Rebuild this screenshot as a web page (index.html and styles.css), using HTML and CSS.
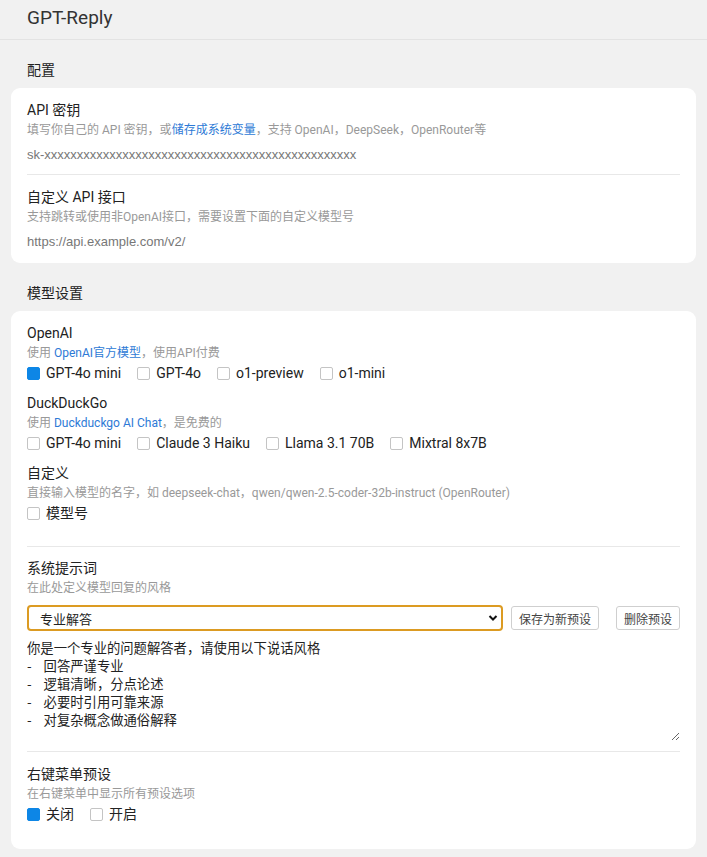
FILE: index.html
```html
<!DOCTYPE html>
<html>
<head>
<title>GPT-Reply</title>
<meta charset="UTF-8">
<link rel="stylesheet" href="styles.css">
</head>
<body>
<div class="topbar">GPT-Reply</div>

<h3 class="group-title">配置</h3>
<div class="card">
  <div class="field">
    <div class="label">API 密钥</div>
    <div class="desc">填写你自己的 API 密钥，或<a href="#">储存成系统变量</a>，支持 OpenAI，DeepSeek，OpenRouter等</div>
    <input type="text" class="plain-input" value="sk-xxxxxxxxxxxxxxxxxxxxxxxxxxxxxxxxxxxxxxxxxxxxxxxx">
  </div>
  <div class="field">
    <div class="label">自定义 API 接口</div>
    <div class="desc">支持跳转或使用非OpenAI接口，需要设置下面的自定义模型号</div>
    <input type="text" class="plain-input" value="https://api.example.com/v2/">
  </div>
</div>

<h3 class="group-title">模型设置</h3>
<div class="card card-models">
  <div class="field models">
    <div class="label">OpenAI</div>
    <div class="desc">使用 <a href="#">OpenAI官方模型</a>，使用API付费</div>
    <div class="checks">
      <label class="check"><span class="box on"></span>GPT-4o mini</label>
      <label class="check"><span class="box"></span>GPT-4o</label>
      <label class="check"><span class="box"></span>o1-preview</label>
      <label class="check"><span class="box"></span>o1-mini</label>
    </div>

    <div class="label">DuckDuckGo</div>
    <div class="desc">使用 <a href="#">Duckduckgo AI Chat</a>，是免费的</div>
    <div class="checks">
      <label class="check"><span class="box"></span>GPT-4o mini</label>
      <label class="check"><span class="box"></span>Claude 3 Haiku</label>
      <label class="check"><span class="box"></span>Llama 3.1 70B</label>
      <label class="check"><span class="box"></span>Mixtral 8x7B</label>
    </div>

    <div class="label">自定义</div>
    <div class="desc">直接输入模型的名字，如 deepseek-chat，qwen/qwen-2.5-coder-32b-instruct (OpenRouter)</div>
    <div class="checks">
      <label class="check"><span class="box"></span>模型号</label>
    </div>
  </div>

  <div class="field prompt">
    <div class="label">系统提示词</div>
    <div class="desc">在此处定义模型回复的风格</div>
    <div class="preset-row">
      <div class="select-wrap">
        <select class="preset-select">
          <option>专业解答</option>
        </select>
        <svg class="chevron" width="10" height="8" viewBox="0 0 10 8"><path d="M1.5 2 L5 5.5 L8.5 2" fill="none" stroke="#111" stroke-width="2"/></svg>
      </div>
      <button class="btn">保存为新预设</button>
      <button class="btn btn-del">删除预设</button>
    </div>
    <textarea class="prompt-text">你是一个专业的问题解答者，请使用以下说话风格
-    回答严谨专业
-    逻辑清晰，分点论述
-    必要时引用可靠来源
-    对复杂概念做通俗解释</textarea>
  </div>

  <div class="field menu">
    <div class="label">右键菜单预设</div>
    <div class="desc">在右键菜单中显示所有预设选项</div>
    <div class="checks">
      <label class="check"><span class="box on"></span>关闭</label>
      <label class="check"><span class="box"></span>开启</label>
    </div>
  </div>
</div>
</body>
</html>
```

FILE: styles.css
```css
body{
    margin: 0;
    background: #f1f1f1;
    color: #222;
    font-family: Roboto, "Noto Sans CJK SC", sans-serif;
    font-size: 14px;
}
.topbar{
    height: 39px;
    line-height: 36px;
    padding-left: 27px;
    font-size: 19px;
    color: #333;
    border-bottom: 1px solid #e3e3e3;
}
.group-title{
    margin: 20px 0 8px;
    padding-left: 27px;
    font-size: 14px;
    font-weight: normal;
    line-height: 20px;
}
.card{
    background: #fff;
    margin: 0 11px;
    border-radius: 9px;
    padding: 12px 16px 12px;
}
.card-models{
    padding-bottom: 13px;
}
.field{
    padding: 12px 0 10px;
    border-top: 1px solid #e8e8e8;
}
.field:first-child{
    padding-top: 0;
    border-top: none;
}
.field:last-child{
    padding-bottom: 0;
}
.label{
    line-height: 20px;
}
.desc{
    margin-top: 1px;
    font-size: 12px;
    line-height: 18px;
    color: #999;
}
.desc a{
    color: #2d7ad6;
    text-decoration: none;
}
.plain-input{
    display: block;
    width: 100%;
    box-sizing: border-box;
    margin-top: 5px;
    height: 20px;
    padding: 0;
    border: none;
    outline: none;
    font-family: "Liberation Sans", Arial, sans-serif;
    font-size: 13px;
    color: #777;
}
.checks{
    display: flex;
    gap: 16px;
    margin-top: 2px;
    margin-bottom: 11px;
}
.check{
    display: flex;
    align-items: center;
    line-height: 18px;
}
.box{
    width: 13px;
    height: 13px;
    box-sizing: border-box;
    border: 1px solid #c4c4c4;
    border-radius: 2px;
    margin-right: 6px;
}
.box.on{
    background: #0d86e6;
    border-color: #0d86e6;
}
.models{
    padding-bottom: 13px;
}
.prompt{
    padding-top: 11px;
}
.preset-row{
    display: flex;
    align-items: center;
    margin-top: 8px;
}
.select-wrap{
    position: relative;
    flex: 1;
    margin-right: 8px;
}
.preset-select{
    display: block;
    width: 100%;
    height: 26px;
    appearance: none;
    -webkit-appearance: none;
    border: 2px solid #dc9b22;
    border-radius: 4px;
    background: #fff;
    padding: 0 11px;
    font-family: "Noto Sans CJK SC", sans-serif;
    font-size: 13px;
    color: #222;
    outline: none;
}
.chevron{
    position: absolute;
    right: 5px;
    top: 9px;
}
.btn{
    height: 24px;
    padding: 0 7px;
    background: #fff;
    border: 1px solid #cfcfcf;
    border-radius: 3px;
    font-family: "Noto Sans CJK SC", sans-serif;
    font-size: 12px;
    color: #444;
}
.btn-del{
    margin-left: 17px;
}
.prompt-text{
    display: block;
    width: 100%;
    box-sizing: border-box;
    height: 102px;
    margin-top: 8px;
    padding: 0;
    border: none;
    outline: none;
    resize: vertical;
    font-family: "Noto Sans CJK SC", sans-serif;
    font-size: 13.33px;
    line-height: 18px;
    color: #222;
}
.menu .checks{
    margin-bottom: 13px;
}
```
